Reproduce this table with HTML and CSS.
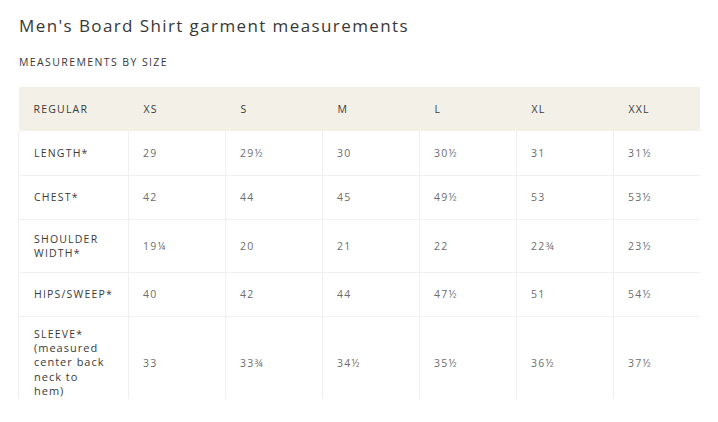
FILE: index.html
```html
<!DOCTYPE html>
<html lang="en">
<head>
<meta charset="utf-8">
<title>Men's Board Shirt garment measurements</title>
<link rel="stylesheet" href="styles.css">
</head>
<body>
<main class="page">
  <h1 class="title">Men's Board Shirt garment measurements</h1>
  <h2 class="subtitle">MEASUREMENTS BY SIZE</h2>
  <div class="table-wrap">
    <table class="sizes">
      <colgroup>
        <col class="c-label"><col class="c-size"><col class="c-size"><col class="c-size"><col class="c-size"><col class="c-size"><col class="c-last">
      </colgroup>
      <thead>
        <tr><th>REGULAR</th><th>XS</th><th>S</th><th>M</th><th>L</th><th>XL</th><th>XXL</th></tr>
      </thead>
      <tbody>
        <tr><th>LENGTH*</th><td>29</td><td>29½</td><td>30</td><td>30½</td><td>31</td><td>31½</td></tr>
        <tr><th>CHEST*</th><td>42</td><td>44</td><td>45</td><td>49½</td><td>53</td><td>53½</td></tr>
        <tr><th>SHOULDER WIDTH*</th><td>19¼</td><td>20</td><td>21</td><td>22</td><td>22¾</td><td>23½</td></tr>
        <tr><th>HIPS/SWEEP*</th><td>40</td><td>42</td><td>44</td><td>47½</td><td>51</td><td>54½</td></tr>
        <tr class="sleeve"><th>SLEEVE* <span class="note">(measured center back neck to hem)</span></th><td>33</td><td>33¾</td><td>34½</td><td>35½</td><td>36½</td><td>37½</td></tr>
      </tbody>
    </table>
  </div>
</main>
</body>
</html>
```

FILE: styles.css
```css
html, body {
  margin: 0;
  padding: 0;
  background: #ffffff;
}
body {
  font-family: "Open Sans", "Noto Sans", sans-serif;
  color: #3f3f3f;
}
.page {
  padding: 14px 0 0 18px;
}
.title {
  margin: 0 0 0 1px;
  font-size: 17px;
  font-weight: 400;
  line-height: 24px;
  letter-spacing: 1.4px;
  color: #383838;
}
.subtitle {
  margin: 17px 0 0 1px;
  font-size: 10.5px;
  font-weight: 400;
  line-height: 14px;
  letter-spacing: 1.4px;
  color: #383838;
}
.table-wrap {
  margin-top: 18px;
  width: 682px;
  height: 312px;
  overflow: hidden;
}
.sizes {
  border-collapse: collapse;
  table-layout: fixed;
  width: 682px;
}
.c-label { width: 110px; }
.c-size { width: 97px; }
.c-last { width: 87px; }
.sizes th,
.sizes td {
  height: 44px;
  box-sizing: border-box;
  padding: 12px 14px;
  font-size: 10.5px;
  line-height: 14px;
  letter-spacing: 1.2px;
  text-align: left;
  vertical-align: middle;
  font-weight: 400;
}
.sizes thead th {
  background: #f3f0e8;
  color: #3a3a3a;
  padding-left: 15px;
}
.sizes tbody th {
  color: #3a3a3a;
  padding-left: 15px;
  padding-right: 18px;
  border: 1px solid #f0f0f0;
  border-top: none;
}
.sizes tbody td {
  color: #6e6e6e;
  border: 1px solid #f0f0f0;
  border-top: none;
}
.sizes tbody td:last-child { border-right: none; }
.sizes .sleeve th { padding-top: 10px; padding-bottom: 10px; }
.note {
  font-size: 11px;
  letter-spacing: 1px;
  line-height: 14.5px;
}
```
